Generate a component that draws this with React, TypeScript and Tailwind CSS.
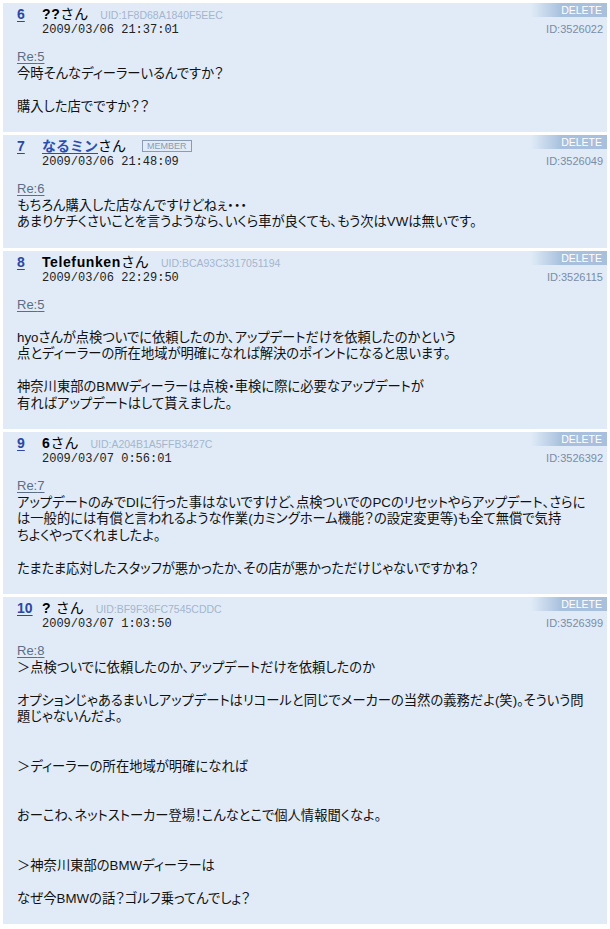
type Post = {
  no: number;
  name: string;
  nameLink?: boolean;
  member?: boolean;
  uid?: string;
  date: string;
  id: string;
  re: number;
  body: string[];
};

const posts: Post[] = [
  {
    no: 6,
    name: "??",
    uid: "1F8D68A1840F5EEC",
    date: "2009/03/06 21:37:01",
    id: "3526022",
    re: 5,
    body: ["今時そんなディーラーいるんですか？", "", "購入した店でですか？？"],
  },
  {
    no: 7,
    name: "なるミン",
    nameLink: true,
    member: true,
    date: "2009/03/06 21:48:09",
    id: "3526049",
    re: 6,
    body: [
      "もちろん購入した店なんですけどねぇ・・・",
      "あまりケチくさいことを言うようなら、いくら車が良くても、もう次はVWは無いです。",
    ],
  },
  {
    no: 8,
    name: "Telefunken",
    uid: "BCA93C3317051194",
    date: "2009/03/06 22:29:50",
    id: "3526115",
    re: 5,
    body: [
      "",
      "hyoさんが点検ついでに依頼したのか、アップデートだけを依頼したのかという",
      "点とディーラーの所在地域が明確になれば解決のポイントになると思います。",
      "",
      "神奈川東部のBMWディーラーは点検・車検に際に必要なアップデートが",
      "有ればアップデートはして貰えました。",
    ],
  },
  {
    no: 9,
    name: "6",
    uid: "A204B1A5FFB3427C",
    date: "2009/03/07 0:56:01",
    id: "3526392",
    re: 7,
    body: [
      "アップデートのみでDIに行った事はないですけど、点検ついでのPCのリセットやらアップデート、さらに",
      "は一般的には有償と言われるような作業(カミングホーム機能？の設定変更等)も全て無償で気持",
      "ちよくやってくれましたよ。",
      "",
      "たまたま応対したスタッフが悪かったか、その店が悪かっただけじゃないですかね？",
    ],
  },
  {
    no: 10,
    name: "? ",
    uid: "BF9F36FC7545CDDC",
    date: "2009/03/07 1:03:50",
    id: "3526399",
    re: 8,
    body: [
      "＞点検ついでに依頼したのか、アップデートだけを依頼したのか",
      "",
      "オプションじゃあるまいしアップデートはリコールと同じでメーカーの当然の義務だよ(笑)。そういう問",
      "題じゃないんだよ。",
      "",
      "",
      "＞ディーラーの所在地域が明確になれば",
      "",
      "",
      "おーこわ、ネットストーカー登場！こんなとこで個人情報聞くなよ。",
      "",
      "",
      "＞神奈川東部のBMWディーラーは",
      "",
      "なぜ今BMWの話？ゴルフ乗ってんでしょ？",
    ],
  },
];

const PostCard = ({ post }: { post: Post }) => {
  return (
    <div className="bg-[#e0ebf7] overflow-hidden pb-[17px]">
      <div className="flex justify-between items-start">
        <div className="pl-[14px] pt-[3px]">
          <div className="flex items-baseline h-[16px] leading-[16px]">
            <a className="w-[25px] shrink-0 text-[14px] font-bold text-[#2b48a4] underline underline-offset-2">
              {post.no}
            </a>
            {post.nameLink ? (
              <a className="text-[14px] font-bold text-[#2c4db0] underline underline-offset-2">
                {post.name}
              </a>
            ) : (
              <span className="text-[14px] font-bold text-black tracking-[0.6px] whitespace-pre">
                {post.name}
              </span>
            )}
            <span className="text-[14px] text-black">さん</span>
            {post.member && (
              <span className="ml-[16px] self-center border border-[#8b9bb5] text-[#8b9bb5] text-[9px] leading-[9px] px-[4px] pt-[1px] font-['Liberation_Sans',sans-serif]">
                MEMBER
              </span>
            )}
            {post.uid && (
              <span className="ml-[12px] text-[10.5px] text-[#a5b5cd] font-['Liberation_Sans',sans-serif]">
                UID:{post.uid}
              </span>
            )}
          </div>
          <div className="pl-[25px] h-[16px] leading-[16px] text-[12px] text-[#222] font-['Liberation_Mono',monospace]">
            {post.date}
          </div>
        </div>
        <div className="flex flex-col items-end">
          <div className="w-[76px] h-[14px] bg-linear-to-r from-[#e0ebf7] from-0% to-[#a8c0dd] to-40% text-right pr-[5px] text-[10.5px] leading-[14px] text-white font-['Liberation_Sans',sans-serif]">
            DELETE
          </div>
          <div className="mt-[4px] pr-[4px] text-[11px] leading-[16px] text-[#7b8ba5] font-['Liberation_Sans',sans-serif]">
            ID:{post.id}
          </div>
        </div>
      </div>
      <div className="pl-[14px] mt-[11px]">
        <a className="block h-[16.5px] leading-[16.5px] text-[13px] text-[#5d6d88] underline underline-offset-2 font-['Liberation_Sans',sans-serif]">
          Re:{post.re}
        </a>
        {post.body.map((line, i) => (
          <div
            key={i}
            className="h-[16.5px] leading-[16.5px] text-[13.3px] text-[#111] whitespace-pre [font-feature-settings:'palt']"
          >
            {line === "" ? "\u00a0" : line}
          </div>
        ))}
      </div>
    </div>
  );
};

const App = () => {
  return (
    <div className="bg-white min-h-screen p-[3px] flex flex-col gap-[3px] font-['Liberation_Sans','Noto_Sans_CJK_JP',sans-serif]">
      {posts.map((post) => (
        <PostCard key={post.no} post={post} />
      ))}
    </div>
  );
};

export default App;
